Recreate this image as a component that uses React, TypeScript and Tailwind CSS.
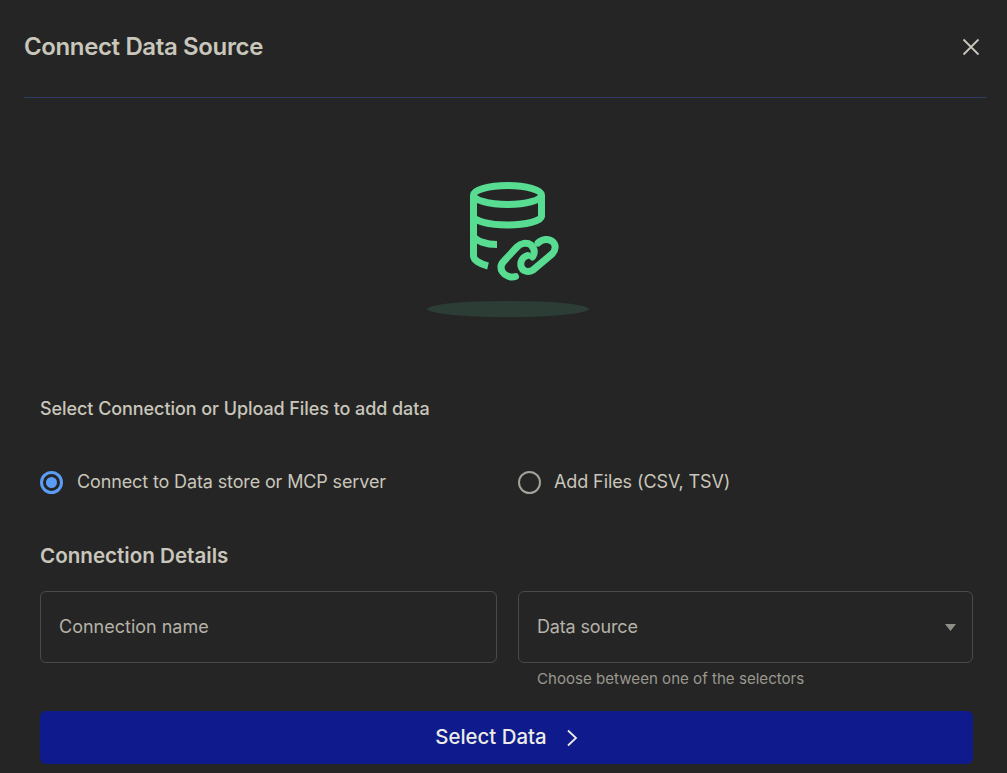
export default function App() {
  return (
    <div className="h-[773px] w-[1007px] overflow-hidden bg-[#252525] text-[#c9c6bb] font-['Inter','Liberation_Sans',sans-serif] flex flex-col">
      <header className="ml-6 mr-[21px] h-[98px] shrink-0 flex items-center justify-between border-b border-[#2f3d66] pr-[6px]">
        <h1 className="text-2xl leading-8 font-semibold -mt-[3px] tracking-[-0.37px]">Connect Data Source</h1>
        <svg width="18" height="18" viewBox="0 0 18 18" fill="none" stroke="#c9c6bb" strokeWidth="1.8" className="-mt-[3px]">
          <path d="M1.5 1.5 16.5 16.5M16.5 1.5 1.5 16.5" />
        </svg>
      </header>
      <div className="mt-[80px] ml-[427px] w-[162px] flex flex-col items-start shrink-0">
        <svg width="100" height="106" viewBox="465 178 100 106" fill="none" stroke="#57dc92" strokeWidth="7" strokeLinecap="butt" strokeLinejoin="round" className="ml-[38px]">
          <ellipse cx="507.5" cy="195" rx="34" ry="9.5" />
          <path d="M541.5 195V217M541.5 216C541.5 221 526 225 507.5 225C489 225 473.5 221 473.5 216" />
          <path d="M473.5 195V256C473.5 260 480 264 488 266" />
          <path d="M473.5 236C476 241 486 244.5 497 244.5" />
          <path d="M515.5 276.5C511 278 505 276 502.5 272C500 268 501 264 504 261L517 247C521 243 527 242 531 245C535 249 535 253 532.5 257" strokeLinecap="round" />
          <path d="M527.5 255.5C523 257 520 261 521 266C522 271 528 273 533 270L552 254C556 250 556 245 553 242C549 238 542 239 538 243" strokeLinecap="round" />
        </svg>
        <div className="mt-[17px] h-4 w-[162px] rounded-[50%] bg-[#2b3d35]" />
      </div>
      <div className="pl-10 pr-[34px] mt-[78px] flex flex-col">
        <p className="text-lg leading-7 font-medium tracking-[-0.07px]">Select Connection or Upload Files to add data</p>
        <div className="mt-[45px] grid grid-cols-[456px_1fr] gap-[22px]">
          <label className="flex items-center gap-[14px] text-lg leading-7 tracking-[-0.13px]">
            <span className="size-[23px] rounded-full border-[3px] border-[#5b9cf5] flex items-center justify-center">
              <span className="size-[11px] rounded-full bg-[#5b9cf5]" />
            </span>
            Connect to Data store or MCP server
          </label>
          <label className="flex items-center gap-[13px] text-lg leading-7 tracking-[-0.1px]">
            <span className="size-[23px] rounded-full border-[2.5px] border-[#a3a199]" />
            Add Files (CSV, TSV)
          </label>
        </div>
        <h2 className="mt-[46px] text-[20.6px] leading-7 font-semibold">Connection Details</h2>
        <div className="mt-[21px] grid grid-cols-[457px_1fr] gap-[21px]">
          <div className="h-[72px] rounded-md border border-[#4a4a4a] px-[18px] flex items-center text-lg text-[#b5b2a8]">Connection name</div>
          <div>
            <div className="h-[72px] rounded-md border border-[#4a4a4a] px-[18px] flex items-center justify-between text-lg text-[#b5b2a8] tracking-[-0.15px]">
              Data source
              <svg width="11" height="7" viewBox="0 0 11 7" fill="#8f8e88" className="mr-[-2px]"><path d="M0 0H11L5.5 7Z" /></svg>
            </div>
            <p className="mt-[6px] px-[19px] leading-5 text-[#9a988f] text-[15.1px]">Choose between one of the selectors</p>
          </div>
        </div>
        <button className="mt-[22px] h-[53px] rounded-md bg-[#0f1b8c] text-[#ecebe6] flex items-center justify-center gap-[19px] text-[20.4px] font-medium">
          Select Data
          <svg width="12" height="18" viewBox="0 0 12 18" fill="none" stroke="#ecebe6" strokeWidth="1.8"><path d="M2 1.5 10 9 2 16.5" /></svg>
        </button>
      </div>
    </div>
  );
}
